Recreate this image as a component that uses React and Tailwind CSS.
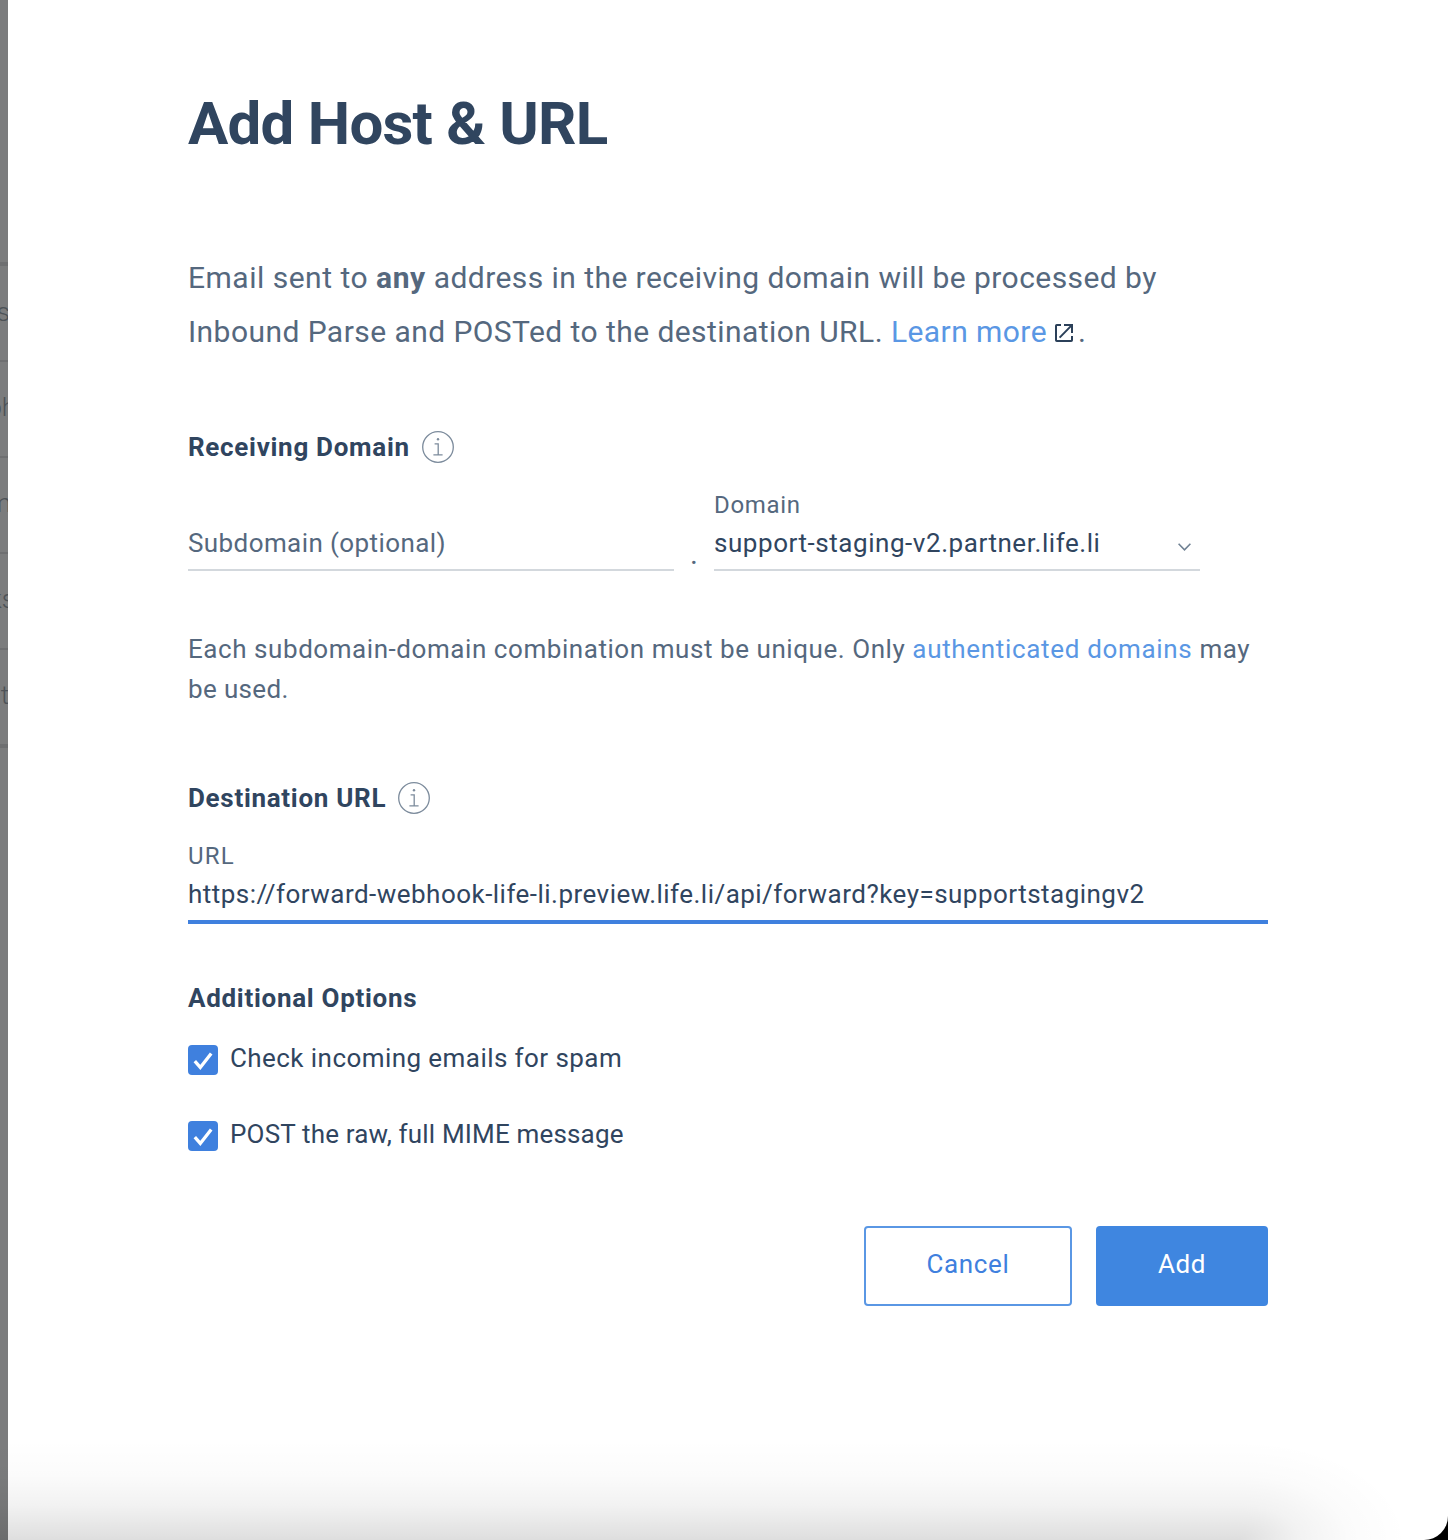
function InfoIcon() {
  return (
    <svg className="size-8 shrink-0" viewBox="0 0 32 32" fill="none" stroke="#7c8b9c" strokeWidth="1.3">
      <circle cx="16" cy="16" r="15.3" />
      <path d="M12.6 12.8h3.6v11M11.4 23.8h9.2" strokeWidth="1.3" />
      <circle cx="16" cy="8.2" r="1.2" fill="#7c8b9c" stroke="none" />
    </svg>
  );
}

function ExternalIcon() {
  return (
    <svg className="inline-block size-[18px] ml-[7.5px] mr-[5.5px] align-[0px]" viewBox="0 0 18 18" fill="none" stroke="#2b4059" strokeWidth="2">
      <path d="M6 1H1.8a.8.8 0 0 0-.8.8v14.4a.8.8 0 0 0 .8.8h14.4a.8.8 0 0 0 .8-.8V12" />
      <path d="M9 1h8v8M16.6 1.4L4.6 13.6" />
    </svg>
  );
}

function Heading({ children, info, className }) {
  return (
    <div className={"flex h-8 items-center gap-3 " + className}>
      <h2 className="text-[26px] leading-8 font-bold tracking-[0.7px] text-[#30455f]">{children}</h2>
      {info && <InfoIcon />}
    </div>
  );
}

function Option({ children, className }) {
  return (
    <label className={"flex h-8 items-start " + className}>
      <span className="mt-[3px] flex size-[30px] items-center justify-center rounded-[4px] bg-[#3f80de]">
        <svg className="size-[30px]" viewBox="0 0 30 30" fill="none" stroke="#fff" strokeWidth="3.3">
          <path d="M6.8 16.2l5.5 6.2L23.2 8.4" />
        </svg>
      </span>
      <span className="ml-3 text-[26px] leading-8 text-[#30455f]">{children}</span>
    </label>
  );
}

const behind = [
  ["s", "h-[98px] border-t-4 pb-[2px]", "-mr-[2px]"],
  ["oh", "h-24 border-t-2 pb-1", "-mr-[8px]"],
  ["m", "h-24 border-t-2 pb-1", "-mr-[3px]"],
  ["ks", "h-24 border-t-2 pb-1", "-mr-[7px]"],
  ["t", "h-24 border-t-2 pb-1", "-mr-[1px]"],
];

export default function App() {
  return (
    <div className="relative flex h-[1540px] w-[1448px] overflow-hidden bg-black font-[Roboto,sans-serif]">
      <div className="w-2 shrink-0 overflow-hidden bg-[#7b7c7d] pt-[262px]">
        {behind.map(([text, row, shift]) => (
          <div key={text} className={"flex items-center justify-end border-[#6e6f71] text-[26px] font-light text-[#4d5257] " + row}>
            <span className={shift}>{text}</span>
          </div>
        ))}
        <div className="h-1 bg-[#6e6f71]" />
      </div>

      <div className="flex grow bg-[linear-gradient(to_right,#7b7c7d_50%,#000_50%)]">
        <main className="flex grow flex-col rounded-br-[24px] bg-white pt-[88px] pr-[180px] pl-[180px]">
          <h1 className="text-[60px] leading-[72px] font-bold tracking-[-0.75px] text-[#30455f]">Add Host &amp; URL</h1>

          <p className="mt-[91px] text-[30px] leading-[54px] tracking-[0.44px] whitespace-nowrap text-[#55687e]">
            <span className="tracking-[0.5px]">Email sent to </span><b className="tracking-[0.6px]">any</b> address in the receiving domain will be processed by
            <br />
            Inbound Parse and POSTed to the destination URL. <a className="text-[#5a97e4]">Learn more</a>
            <ExternalIcon />.
          </p>

          <Heading info className="mt-[72px]">Receiving Domain</Heading>

          <div className="mt-[30px] flex">
            <div className="flex w-[486px] flex-col border-b-2 border-[#d3d8dd] pt-[34px] pb-[10px]">
              <span className="text-[26px] leading-8 tracking-[0.41px] text-[#55687e]">Subdomain (optional)</span>
            </div>
            <span className="w-10 self-end pb-px text-center text-[30px] leading-8 text-[#55687e]">.</span>
            <div className="flex w-[486px] flex-col border-b-2 border-[#d3d8dd]">
              <span className="text-2xl leading-6 tracking-[0.7px] text-[#55687e]">Domain</span>
              <div className="mt-[10px] mb-[10px] flex items-center justify-between pr-[9px]">
                <span className="text-[26px] leading-8 tracking-[0.55px] text-[#30455f]">support-staging-v2.partner.life.li</span>
                <svg className="mt-[7px] h-2 w-[13px]" viewBox="0 0 13 8" fill="none" stroke="#6f8193" strokeWidth="1.6">
                  <path d="M.6.8l5.9 6 5.9-6" />
                </svg>
              </div>
            </div>
          </div>

          <p className="mt-[58px] text-[26px] leading-10 tracking-[0.56px] whitespace-nowrap text-[#55687e]">
            Each subdomain-domain combination must be unique. Only{" "}
            <a className="tracking-[0.67px] text-[#5a97e4]">authenticated domains</a> may
            <br />
            <span className="tracking-[0.35px]">be used.</span>
          </p>

          <Heading info className="mt-[73px]">Destination URL</Heading>
          <div className="mt-[30px] flex flex-col border-b-4 border-[#3f80de] pb-[10px]">
            <span className="text-2xl leading-6 tracking-[1.2px] text-[#55687e]">URL</span>
            <span className="mt-[10px] text-[26px] leading-8 tracking-[0.47px] whitespace-nowrap text-[#30455f]">
              https://forward-webhook-life-li.preview.life.li/api/forward?key=supportstagingv2
            </span>
          </div>

          <Heading className="mt-[58px]">Additional Options</Heading>
          <Option className="mt-7"><span className="tracking-[0.43px]">Check incoming emails for spam</span></Option>
          <Option className="mt-11"><span className="tracking-[0.17px]">POST the raw, full MIME message</span></Option>

          <div className="mt-[76px] flex justify-end gap-6">
            <button className="h-20 w-[208px] rounded border-2 border-[#5a97e4] pb-1 text-[26px] tracking-[0.64px] text-[#3f80de]">Cancel</button>
            <button className="h-20 w-[172px] rounded bg-[#3f86e0] pb-1 text-[26px] tracking-[0.5px] text-white">Add</button>
          </div>
        </main>
      </div>

      <div className="pointer-events-none absolute bottom-0 left-0 flex h-[100px] w-[1448px]">
        <div className="w-[1240px] bg-[linear-gradient(to_top,rgba(0,0,0,0.13),rgba(0,0,0,0.05)_35%,rgba(0,0,0,0.015)_65%,transparent)]" />
        <div className="w-[208px] bg-[radial-gradient(168px_100px_at_0%_100%,rgba(0,0,0,0.13),rgba(0,0,0,0.05)_35%,rgba(0,0,0,0.015)_65%,transparent)]" />
      </div>
    </div>
  );
}
